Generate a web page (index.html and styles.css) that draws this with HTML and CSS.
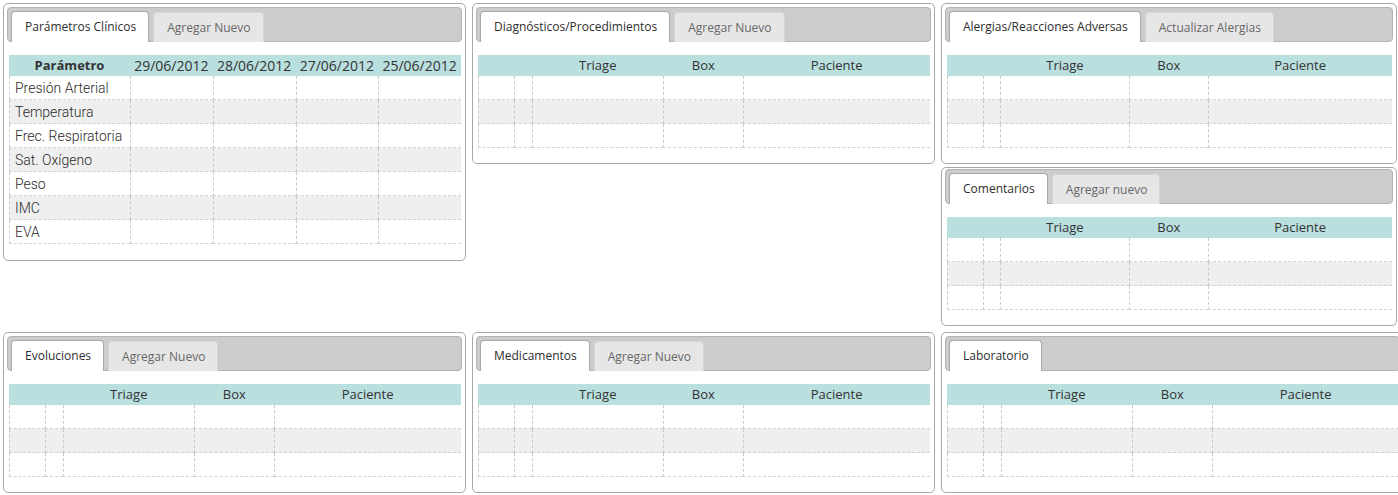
FILE: index.html
```html
<!DOCTYPE html>
<html lang="es">
<head>
<meta charset="utf-8">
<title>Ficha clínica</title>
<link rel="stylesheet" href="styles.css">
</head>
<body>
<div class="page">
  <div class="row row-top">
    <section class="panel panel-wide panel-params">
      <div class="tabbar">
        <span class="tab active">Parámetros Clínicos</span>
        <span class="tab">Agregar Nuevo</span>
      </div>
      <table class="grid params">
        <thead>
          <tr>
            <th class="c-param">Parámetro</th>
            <th class="c-date">29/06/2012</th>
            <th class="c-date">28/06/2012</th>
            <th class="c-date">27/06/2012</th>
            <th class="c-date">25/06/2012</th>
          </tr>
        </thead>
        <tbody>
          <tr><td class="label">Presión Arterial</td><td></td><td></td><td></td><td></td></tr>
          <tr><td class="label">Temperatura</td><td></td><td></td><td></td><td></td></tr>
          <tr><td class="label">Frec. Respiratoria</td><td></td><td></td><td></td><td></td></tr>
          <tr><td class="label">Sat. Oxígeno</td><td></td><td></td><td></td><td></td></tr>
          <tr><td class="label">Peso</td><td></td><td></td><td></td><td></td></tr>
          <tr><td class="label">IMC</td><td></td><td></td><td></td><td></td></tr>
          <tr><td class="label">EVA</td><td></td><td></td><td></td><td></td></tr>
        </tbody>
      </table>
    </section>

    <section class="panel panel-wide">
      <div class="tabbar">
        <span class="tab active">Diagnósticos/Procedimientos</span>
        <span class="tab">Agregar Nuevo</span>
      </div>
      <table class="grid list">
        <colgroup><col class="w1"><col class="w2"><col class="w3"><col class="w4"><col class="w5"></colgroup>
        <thead><tr><th></th><th></th><th>Triage</th><th>Box</th><th>Paciente</th></tr></thead>
        <tbody>
          <tr><td></td><td></td><td></td><td></td><td></td></tr>
          <tr><td></td><td></td><td></td><td></td><td></td></tr>
          <tr><td></td><td></td><td></td><td></td><td></td></tr>
        </tbody>
      </table>
    </section>

    <div class="stack">
      <section class="panel">
        <div class="tabbar">
          <span class="tab active">Alergias/Reacciones Adversas</span>
          <span class="tab">Actualizar Alergias</span>
        </div>
        <table class="grid list">
          <colgroup><col class="w1"><col class="w2"><col class="w3"><col class="w4"><col class="w5"></colgroup>
          <thead><tr><th></th><th></th><th>Triage</th><th>Box</th><th>Paciente</th></tr></thead>
          <tbody>
            <tr><td></td><td></td><td></td><td></td><td></td></tr>
            <tr><td></td><td></td><td></td><td></td><td></td></tr>
            <tr><td></td><td></td><td></td><td></td><td></td></tr>
          </tbody>
        </table>
      </section>
      <section class="panel panel-tight">
        <div class="tabbar">
          <span class="tab active">Comentarios</span>
          <span class="tab">Agregar nuevo</span>
        </div>
        <table class="grid list">
          <colgroup><col class="w1"><col class="w2"><col class="w3"><col class="w4"><col class="w5"></colgroup>
          <thead><tr><th></th><th></th><th>Triage</th><th>Box</th><th>Paciente</th></tr></thead>
          <tbody>
            <tr><td></td><td></td><td></td><td></td><td></td></tr>
            <tr><td></td><td></td><td></td><td></td><td></td></tr>
            <tr><td></td><td></td><td></td><td></td><td></td></tr>
          </tbody>
        </table>
      </section>
    </div>
  </div>

  <div class="row row-bottom">
    <section class="panel panel-wide">
      <div class="tabbar">
        <span class="tab active">Evoluciones</span>
        <span class="tab">Agregar Nuevo</span>
      </div>
      <table class="grid list">
        <colgroup><col class="w1"><col class="w2"><col class="w3"><col class="w4"><col class="w5"></colgroup>
        <thead><tr><th></th><th></th><th>Triage</th><th>Box</th><th>Paciente</th></tr></thead>
        <tbody>
          <tr><td></td><td></td><td></td><td></td><td></td></tr>
          <tr><td></td><td></td><td></td><td></td><td></td></tr>
          <tr><td></td><td></td><td></td><td></td><td></td></tr>
        </tbody>
      </table>
    </section>

    <section class="panel panel-wide">
      <div class="tabbar">
        <span class="tab active">Medicamentos</span>
        <span class="tab">Agregar Nuevo</span>
      </div>
      <table class="grid list">
        <colgroup><col class="w1"><col class="w2"><col class="w3"><col class="w4"><col class="w5"></colgroup>
        <thead><tr><th></th><th></th><th>Triage</th><th>Box</th><th>Paciente</th></tr></thead>
        <tbody>
          <tr><td></td><td></td><td></td><td></td><td></td></tr>
          <tr><td></td><td></td><td></td><td></td><td></td></tr>
          <tr><td></td><td></td><td></td><td></td><td></td></tr>
        </tbody>
      </table>
    </section>

    <section class="panel panel-wide">
      <div class="tabbar">
        <span class="tab active">Laboratorio</span>
      </div>
      <table class="grid list">
        <colgroup><col class="w1"><col class="w2"><col class="w3"><col class="w4"><col class="w5"></colgroup>
        <thead><tr><th></th><th></th><th>Triage</th><th>Box</th><th>Paciente</th></tr></thead>
        <tbody>
          <tr><td></td><td></td><td></td><td></td><td></td></tr>
          <tr><td></td><td></td><td></td><td></td><td></td></tr>
          <tr><td></td><td></td><td></td><td></td><td></td></tr>
        </tbody>
      </table>
    </section>
  </div>
</div>
</body>
</html>
```

FILE: styles.css
```css
html, body {
  margin: 0;
  padding: 0;
  background: #ffffff;
  overflow: hidden;
}

body {
  font-family: "Open Sans", "Noto Sans", sans-serif;
  color: #333333;
}

.page {
  padding: 3px 0 0 3px;
  display: flex;
  flex-direction: column;
  gap: 6px;
  width: 1420px;
}

.row {
  display: flex;
  align-items: flex-start;
  gap: 6px;
}

.stack {
  display: flex;
  flex-direction: column;
  gap: 3px;
  width: 456px;
  flex-shrink: 0;
}

.panel {
  box-sizing: border-box;
  border: 1px solid #a8a8a8;
  border-radius: 5px;
  padding: 3px 3px 15px 3px;
  background: #ffffff;
  flex-shrink: 0;
}

.panel-wide {
  width: 463px;
}

.panel-params {
  padding-bottom: 16px;
}

.panel-tight {
  padding-top: 1px;
}

.tabbar {
  box-sizing: border-box;
  height: 35px;
  background: #cccccc;
  border: 1px solid #b4b4b4;
  border-radius: 4px;
  display: flex;
  align-items: flex-end;
  gap: 4px;
  padding: 0 3px;
}

.tab {
  box-sizing: border-box;
  height: 30px;
  margin-bottom: -1px;
  padding: 0 12px 0 13px;
  display: flex;
  align-items: center;
  font-size: 12px;
  color: #666666;
  background: #e6e6e6;
  border: 1px solid #d6d6d6;
  border-bottom: none;
  border-radius: 4px 4px 0 0;
  white-space: nowrap;
}

.tab.active {
  height: 31px;
  background: #ffffff;
  color: #2e2e2e;
  border-color: #a8a8a8;
  padding-bottom: 1px;
}

.grid {
  width: calc(100% - 3px);
  margin: 13px 0 0 2px;
  border-collapse: separate;
  border-spacing: 0;
  table-layout: fixed;
}

.grid th {
  box-sizing: border-box;
  height: 21px;
  padding: 0 0 1px 0;
  background: #badfdf;
  font-size: 13px;
  font-weight: normal;
  color: #333333;
  text-align: center;
  white-space: nowrap;
}

.grid td {
  box-sizing: border-box;
  height: 24px;
  padding: 0;
  border-left: 1px dashed #c9c9c9;
  border-bottom: 1px dashed #d2d2d2;
}

.grid tbody tr:nth-child(even) td {
  background: #efefef;
}

.params .c-param {
  width: 121px;
  font-weight: bold;
}

.params .c-date {
  font-size: 14px;
}

.params td.label {
  padding-left: 5px;
  font-family: Roboto, "Open Sans", sans-serif;
  font-weight: 300;
  font-size: 14px;
  color: #2a2a2a;
  white-space: nowrap;
}

.list .w1 { width: 8%; }
.list .w2 { width: 4%; }
.list .w3 { width: 29%; }
.list .w4 { width: 17.7%; }
.list .w5 { width: 41.3%; }
```
